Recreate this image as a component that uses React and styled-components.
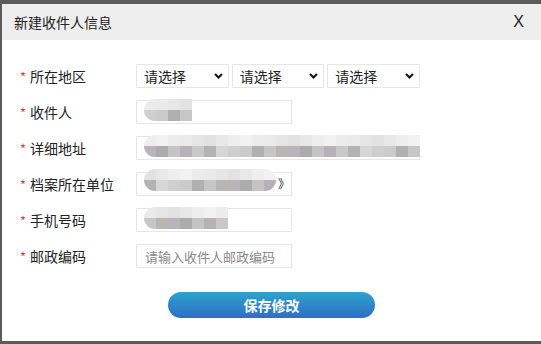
import React from "react";
import styled, { createGlobalStyle } from "styled-components";

const Global = createGlobalStyle`
  html, body { margin: 0; padding: 0; }
  body {
    background: #5b5b5b;
    font-family: "Noto Sans CJK SC", "Noto Sans", sans-serif;
    width: 541px;
    height: 344px;
    overflow: hidden;
  }
`;

const Modal = styled.div`
  margin: 4px 0 0 2px;
  width: 539px;
  height: 337px;
  background: #fff;
  display: flex;
  flex-direction: column;
`;

const Header = styled.div`
  height: 36px;
  background: #eeeeee;
  display: flex;
  align-items: center;
  justify-content: space-between;
  padding: 0 17px 0 12px;
`;

const Title = styled.div`
  font-size: 14px;
  color: #222;
`;

const Close = styled.div`
  font-family: "Liberation Sans", Arial, sans-serif;
  font-size: 16px;
  color: #222;
`;

const Form = styled.div`
  padding: 24px 0 0 18px;
  display: flex;
  flex-direction: column;
  gap: 12px;
`;

const Row = styled.div`
  display: flex;
  align-items: center;
  height: 24px;
`;

const Label = styled.div`
  width: 116px;
  font-size: 14px;
  color: #222;
  display: flex;
  align-items: center;
`;

const Star = styled.span`
  color: #e43a3a;
  width: 10px;
  font-size: 13px;
`;

const SelectGroup = styled.div`
  display: flex;
  gap: 3px;
  width: 284px;
`;

const SelectBox = styled.div`
  position: relative;
  flex: 1;
  height: 24px;
  box-sizing: border-box;
  border: 1px solid #e6e6e6;
  display: flex;
  align-items: center;
  padding-left: 7px;
  font-size: 14px;
  color: #222;
`;

const Chevron = styled.svg`
  position: absolute;
  right: 5px;
  top: 8px;
`;

const Field = styled.div`
  position: relative;
  width: ${(p) => p.$w}px;
  height: 24px;
  box-sizing: border-box;
  border: 1px solid #e6e6e6;
  display: flex;
  align-items: center;
  padding-left: 8px;
  font-size: 13px;
  color: #888;
`;

const Blur = styled.div`
  position: absolute;
  left: 7px;
  top: ${(p) => p.$top}px;
  display: flex;
  border-radius: 11px 0 0 11px;
  overflow: hidden;
  border-top-right-radius: ${(p) => (p.$roundEnd ? "11px" : "0")};
  border-bottom-right-radius: ${(p) => (p.$roundEnd ? "11px" : "0")};
`;

const Cell = styled.div`
  width: 12px;
  display: flex;
  flex-direction: column;
`;

const Half = styled.div`
  height: ${(p) => p.$h}px;
`;

const Tail = styled.span`
  position: absolute;
  right: 1px;
  top: 2px;
  font-size: 12px;
  color: #222;
`;

const ButtonRow = styled.div`
  display: flex;
  justify-content: center;
  padding-top: 24px;
`;

const SaveButton = styled.button`
  width: 207px;
  height: 26px;
  border: none;
  border-radius: 13px;
  background: linear-gradient(180deg, #2ea3cb 0%, #2f6dc8 100%);
  color: #fff;
  font-family: "Noto Sans CJK SC", sans-serif;
  font-weight: 700;
  font-size: 14px;
  padding: 0;
`;

const tops = ["#e6e6e6", "#ececec", "#eeeeee", "#e2e2e2", "#eaeaea", "#f2f2f2", "#e8e8e8"];
const bots = ["#c4c4c4", "#cfcfcf", "#b8b4bb", "#b3b3b3", "#c6c6c6", "#b5b2b8", "#cbcbcb", "#acacac", "#d6d6d6", "#b9b6b6", "#c9c9c9", "#b0b0b0"];

function Pixels({ n, top, roundEnd, seed = 0 }) {
  const cells = [];
  for (let i = 0; i < n; i++) {
    cells.push(
      <Cell key={i}>
        <Half $h={11} style={{ background: tops[(i * 3 + seed) % tops.length] }} />
        <Half $h={11} style={{ background: bots[(i * 5 + seed) % bots.length] }} />
      </Cell>
    );
  }
  return (
    <Blur $top={top} $roundEnd={roundEnd}>
      {cells}
    </Blur>
  );
}

function Select() {
  return (
    <SelectBox>
      请选择
      <Chevron width="9" height="6" viewBox="0 0 9 6">
        <path d="M1 1 L4.5 4.5 L8 1" fill="none" stroke="#111" strokeWidth="2" />
      </Chevron>
    </SelectBox>
  );
}

export default function App() {
  return (
    <>
      <Global />
      <Modal>
        <Header>
          <Title>新建收件人信息</Title>
          <Close>X</Close>
        </Header>
        <Form>
          <Row>
            <Label><Star>*</Star>所在地区</Label>
            <SelectGroup>
              <Select />
              <Select />
              <Select />
            </SelectGroup>
          </Row>
          <Row>
            <Label><Star>*</Star>收件人</Label>
            <Field $w={156}>
              <Pixels n={4} top={-2} seed={1} />
            </Field>
          </Row>
          <Row>
            <Label><Star>*</Star>详细地址</Label>
            <Field $w={284}>
              <Pixels n={23} top={-2} seed={2} />
            </Field>
          </Row>
          <Row>
            <Label><Star>*</Star>档案所在单位</Label>
            <Field $w={156}>
              <Pixels n={11} top={-4} seed={3} roundEnd />
              <Tail>》</Tail>
            </Field>
          </Row>
          <Row>
            <Label><Star>*</Star>手机号码</Label>
            <Field $w={156}>
              <Pixels n={7} top={-2} seed={4} />
            </Field>
          </Row>
          <Row>
            <Label><Star>*</Star>邮政编码</Label>
            <Field $w={156}>请输入收件人邮政编码</Field>
          </Row>
        </Form>
        <ButtonRow>
          <SaveButton>保存修改</SaveButton>
        </ButtonRow>
      </Modal>
    </>
  );
}
